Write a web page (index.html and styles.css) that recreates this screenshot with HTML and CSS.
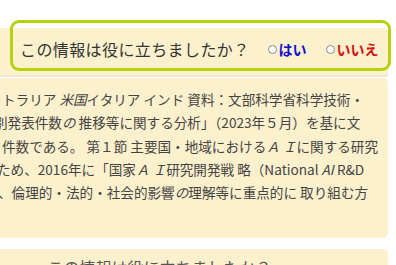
FILE: index.html
```html
<!DOCTYPE html>
<html lang="ja">
<head>
    <meta charset="UTF-8">
    <title>この情報は役に立ちましたか</title>
    <link rel="stylesheet" href="styles.css">
</head>
<body>
    <div class="page">
        <div class="vote">
            <span class="vote_q">この情報は役に立ちましたか？</span>
            <label class="opt yes"><i></i>はい</label>
            <label class="opt no"><i></i>いいえ</label>
        </div>
        <div class="hilite"></div>

        <div class="panel">
            <div class="line l1">トラリア <em>米国</em>イタリア インド 資料：文部科学省科学技術・</div>
            <div class="line l2">別発表件数<em>の</em> 推移等に関する分析」（2023年５月）を基に文</div>
            <div class="line l3">件数である。 第１節 主要国・地域における<em>Ａ Ｉ</em>に関する研究</div>
            <div class="line l4">ため、2016年に「国家<em>Ａ Ｉ</em>研究開発戦 略（National <em>AI</em> R&amp;D</div>
            <div class="line l5">、倫理的・法的・社会的影響<em>の</em>理解等に重点的に 取り組む方</div>
        </div>

        <div class="panel next">
            <div class="next_q">- - - この情報は役に立ちましたか？</div>
        </div>
    </div>
</body>
</html>
```

FILE: styles.css
```css
*{
    margin:0;padding:0;
}
html,body{
    width:100%;
    height:100%;
    background-color:#fff;
    color:#444;
    font-family:"Noto Sans CJK JP","Noto Sans",sans-serif;
    overflow:hidden;
}
.page{
    position:relative;
    width:388px;
    padding-top:28px;
}
/* 評価バー */
.vote{
    display:flex;
    align-items:center;
    height:42px;
    padding-left:20px;
    padding-bottom:5px;
    background-color:#fdf1cd;
    border-bottom:2px solid #efe6d2;
    border-radius:0 5px 0 0;
}
.vote_q{
    font-size:16px;
    color:#333;
    letter-spacing:0.4px;
}
.opt{
    display:flex;
    align-items:center;
    font-size:14px;
    font-weight:bold;
    margin-left:18px;
}
.opt i{
    display:block;
    width:7px;
    height:7px;
    margin-right:2px;
    border:1px solid #888;
    border-radius:50%;
    background-color:#fff;
}
.yes{
    color:#1010d0;
}
.no{
    margin-left:19px;
    color:#d81010;
}
.hilite{
    position:absolute;
    left:10px;
    top:20px;
    width:375px;
    height:45px;
    border:3px solid #b6d20c;
    border-radius:9px;
}
/* 本文 */
.panel{
    height:150px;
    margin-top:1px;
    padding-top:10px;
    background-color:#fdf1cd;
    border-radius:0 5px 5px 0;
    overflow:hidden;
}
.line{
    font-size:13.6px;
    line-height:23.3px;
    white-space:nowrap;
    color:#444;
}
.line em{
    font-style:italic;
}
.l1{
    padding-left:2px;
}
.l2{
    margin-left:-6px;
}
.l3{
    padding-left:2px;
}
.l4{
    margin-left:-3px;
}
.l5{
    margin-left:-2px;
}
.next{
    margin-top:11px;
    height:40px;
    padding-top:6px;
}
.next_q{
    padding-left:20px;
    font-size:16px;
    color:#555;
    white-space:nowrap;
}
```
